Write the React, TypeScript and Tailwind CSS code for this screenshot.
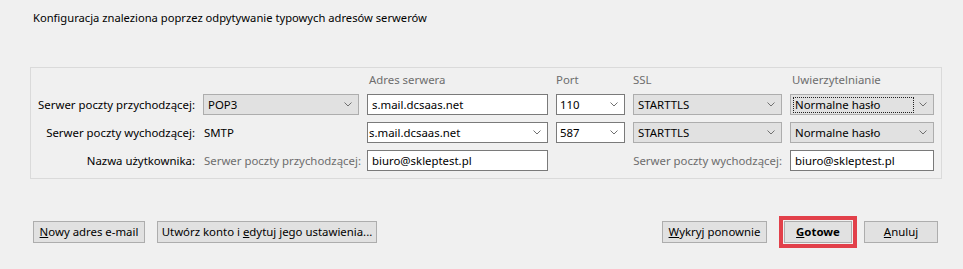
import React from 'react';

const Chevron = () => (
    <svg width="8" height="5" viewBox="0 0 8 5" className="shrink-0">
        <path d="M0.5 0.5 L4 4 L7.5 0.5" fill="none" stroke="#707070" strokeWidth="1" />
    </svg>
);

// gray read-only dropdown
const GrayCombo = ({ value, focused = false }: { value: string; focused?: boolean }) => (
    <div className="h-[21px] flex items-center justify-between bg-[#e1e1e1] border border-[#adadad] pl-[3px] pr-[6px]">
        <span className={focused ? 'px-[1px] leading-[14px] outline-1 outline-dotted outline-[#202020] w-[119px]' : 'pl-[1px]'}>{value}</span>
        <Chevron />
    </div>
);

// white editable dropdown
const EditCombo = ({ value, pad = 'pl-[1px]' }: { value: string; pad?: string }) => (
    <div className={`h-[21px] flex items-center justify-between bg-white border border-[#7a7a7a] pr-[6px] ${pad}`}>
        <span>{value}</span>
        <Chevron />
    </div>
);

const Input = ({ value }: { value: string }) => (
    <div className="h-[21px] flex items-center bg-white border border-[#7a7a7a] pl-[4px]">{value}</div>
);

const Btn = ({ w, children, bold = false, ring = false }: { w: string; children: React.ReactNode; bold?: boolean; ring?: boolean }) => (
    <button
        className={`${w} h-[22px] flex items-center justify-center whitespace-nowrap bg-[#e1e1e1] border border-[#adadad] ${bold ? 'font-bold' : ''} ${ring ? 'outline-4 outline-solid outline-[#e2404a] outline-offset-[1px]' : ''}`}
    >
        {children}
    </button>
);

const App = () => {
    return (
        <div className="w-[963px] h-[269px] bg-[#f0f0f0] text-[11.4px] leading-[16px] text-[#000] font-['Segoe_UI','Noto_Sans',sans-serif] flex flex-col">
            <p className="pl-[33px] pt-[10px] text-[11.2px] leading-[16px] whitespace-nowrap">Konfiguracja znaleziona poprzez odpytywanie typowych adresów serwerów</p>

            <div className="ml-[30px] mt-[41px] w-[912px] border border-[#dadada] pt-[5px] pb-[7px] grid grid-cols-[164px_156px_181px_69px_149px_144px] gap-x-[8px] gap-y-[7px] items-center whitespace-nowrap">
                {/* header */}
                <div className="h-[14px]" />
                <div />
                <div className="pl-[2px] leading-[14px] text-[#6d6d6d]">Adres serwera</div>
                <div className="leading-[14px] text-[#6d6d6d]">Port</div>
                <div className="leading-[14px] text-[#6d6d6d]">SSL</div>
                <div className="pl-[2px] leading-[14px] text-[#6d6d6d]">Uwierzytelnianie</div>

                {/* incoming */}
                <div className="text-right">Serwer poczty przychodzącej:</div>
                <GrayCombo value="POP3" />
                <Input value="s.mail.dcsaas.net" />
                <EditCombo value="110" pad="pl-[3px]" />
                <GrayCombo value="STARTTLS" />
                <GrayCombo value="Normalne hasło" focused />

                {/* outgoing */}
                <div className="text-right">Serwer poczty wychodzącej:</div>
                <div className="pl-[1px] h-[21px] flex items-center">SMTP</div>
                <EditCombo value="s.mail.dcsaas.net" />
                <EditCombo value="587" pad="pl-[3px]" />
                <GrayCombo value="STARTTLS" />
                <GrayCombo value="Normalne hasło" />

                {/* username */}
                <div className="text-right">Nazwa użytkownika:</div>
                <div className="pl-[1px] text-[#6d6d6d]">Serwer poczty przychodzącej:</div>
                <Input value="biuro@skleptest.pl" />
                <div />
                <div className="text-right text-[#6d6d6d]">Serwer poczty wychodzącej:</div>
                <Input value="biuro@skleptest.pl" />
            </div>

            <div className="mt-[42px] flex items-center pl-[33px] pr-[25px]">
                <Btn w="w-[112px]"><span><u>N</u>owy adres e-mail</span></Btn>
                <div className="ml-[12px]">
                    <Btn w="w-[220px]"><span>Utwórz konto i <u>e</u>dytuj jego ustawienia...</span></Btn>
                </div>
                <div className="ml-auto flex items-center gap-x-[12px]">
                    <div className="mr-[5px]">
                        <Btn w="w-[105px]"><span><u>W</u>ykryj ponownie</span></Btn>
                    </div>
                    <Btn w="w-[68px]" bold ring><span><u>G</u>otowe</span></Btn>
                    <Btn w="w-[74px]"><span><u>A</u>nuluj</span></Btn>
                </div>
            </div>
        </div>
    );
};

export default App;
